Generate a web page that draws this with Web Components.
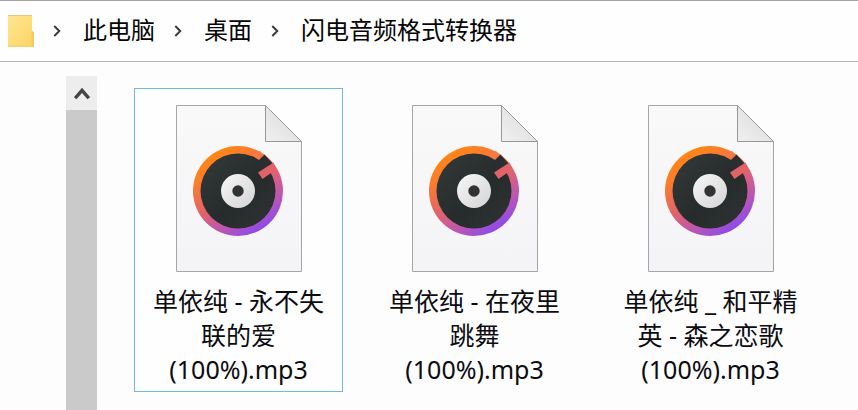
<!DOCTYPE html>
<html lang="zh-CN">
<head>
<meta charset="utf-8">
<meta name="viewport" content="width=device-width, initial-scale=1">
<title>闪电音频格式转换器</title>
<style>
  html, body { height: 100%; }
  body {
    margin: 0;
    background: #fdfdfe;
    color: #0c0c10;
    font: 24px/34px "Noto Sans", "Noto Sans CJK SC", sans-serif;
  }
</style>
</head>
<body>
<file-explorer>
  <path-bar slot="path">
    <path-crumb>此电脑</path-crumb>
    <path-crumb>桌面</path-crumb>
    <path-crumb>闪电音频格式转换器</path-crumb>
  </path-bar>
  <file-tile selected>单依纯 - 永不失联的爱(100%).mp3</file-tile>
  <file-tile>单依纯 - 在夜里跳舞(100%).mp3</file-tile>
  <file-tile>单依纯 _ 和平精英 - 森之恋歌(100%).mp3</file-tile>
</file-explorer>

<script>
(function () {
  'use strict';

  function define(name, html) {
    var template = document.createElement('template');
    template.innerHTML = html;
    customElements.define(name, class extends HTMLElement {
      constructor() {
        super();
        this.attachShadow({ mode: 'open' }).appendChild(template.content.cloneNode(true));
      }
    });
  }

  define('file-explorer', [
    '<style>',
    ':host{display:flex;flex-direction:column;min-height:100%;box-sizing:border-box;border-top:1px solid #a5a3aa}',
    '.body{flex:1;display:flex;align-items:stretch;padding:14px 16px 0 66px}',
    '.files{flex:1;display:flex;flex-wrap:wrap;align-content:flex-start;gap:27px;padding:12px 0 18px 37px}',
    '</style>',
    '<slot name="path"></slot>',
    '<div class="body">',
    '<scroll-rail></scroll-rail>',
    '<main class="files"><slot></slot></main>',
    '</div>'
  ].join(''));

  define('path-bar', [
    '<style>',
    ':host{display:block;border-bottom:1px solid #b7b3bb;background:#fefefe}',
    'nav{display:flex;align-items:center;min-height:60px;padding-left:8px}',
    '.folder{display:block;flex:none}',
    '</style>',
    '<nav aria-label="路径">',
    '<svg class="folder" width="26" height="32" viewBox="0 0 26 32" aria-hidden="true">',
    '<defs><linearGradient id="f" x1="0" y1="0" x2="1" y2="1"><stop offset="0" stop-color="#ffe592"/><stop offset="1" stop-color="#fbd565"/></linearGradient></defs>',
    '<path d="M0 0.5H24V15.5L26 18V31.5H0Z" fill="url(#f)"/>',
    '<path d="M24 15.5 26 18V31.5H23.5V18Z" fill="#f6c95c"/>',
    '<path d="M0 .5H24" stroke="#e8c878"/>',
    '<path d="M0 31.2H26" stroke="#efc45b"/>',
    '</svg>',
    '<slot></slot>',
    '</nav>'
  ].join(''));

  define('path-crumb', [
    '<style>',
    ':host{display:flex;align-items:center}',
    'svg{display:block;margin:0 22px 0 19px}',
    'a{padding-bottom:3px;color:#050505;text-decoration:none;white-space:nowrap}',
    'a:hover{background:#e5f3ff}',
    '</style>',
    '<svg width="8" height="12" viewBox="0 0 8 12" aria-hidden="true"><path d="M1.3 1 6.3 6 1.3 11" fill="none" stroke="#38383c" stroke-width="1.9"/></svg>',
    '<a href="#"><slot></slot></a>'
  ].join(''));

  define('scroll-rail', [
    '<style>',
    ':host{display:flex;flex-direction:column;flex:none;width:31px;background:#f0f0f1}',
    'button{display:flex;align-items:center;justify-content:center;height:34px;padding:0;border:0;background:#ededee}',
    '.thumb{flex:1;background:#cacaca}',
    '</style>',
    '<button type="button" aria-label="向上滚动">',
    '<svg width="16" height="14" viewBox="0 0 16 14" aria-hidden="true"><path d="M1.2 12.2 8 4.4 14.8 12.2" fill="none" stroke="#434448" stroke-width="3.4"/></svg>',
    '</button>',
    '<div class="thumb"></div>'
  ].join(''));

  // page with a folded corner and the record logo on it
  define('audio-icon', [
    '<style>:host{display:block}svg{display:block}</style>',
    '<svg width="126" height="167" viewBox="0 0 126 167" aria-hidden="true">',
    '<defs>',
    '<linearGradient id="paper" x1="0" y1="0" x2="0" y2="1"><stop offset="0" stop-color="#f9f9fa"/><stop offset="1" stop-color="#f4f4f6"/></linearGradient>',
    '<linearGradient id="fold" x1="0" y1="1" x2="1" y2="0"><stop offset="0" stop-color="#f0f0f0"/><stop offset="1" stop-color="#d8d9da"/></linearGradient>',
    '<linearGradient id="ring" gradientUnits="userSpaceOnUse" x1="38" y1="48" x2="85" y2="126"><stop offset="0" stop-color="#ff8615"/><stop offset=".18" stop-color="#fc7c2c"/><stop offset=".5" stop-color="#e2636c"/><stop offset=".78" stop-color="#b956b5"/><stop offset="1" stop-color="#8a49ee"/></linearGradient>',
    '<linearGradient id="disc" x1="0" y1="0" x2="1" y2="1"><stop offset="0" stop-color="#34393b"/><stop offset=".55" stop-color="#262b2b"/><stop offset="1" stop-color="#303334"/></linearGradient>',
    '<linearGradient id="label" x1="0" y1="0" x2="1" y2="1"><stop offset="0" stop-color="#f7f7f7"/><stop offset="1" stop-color="#d4d4d6"/></linearGradient>',
    '</defs>',
    '<path d="M.5.5H89.5L125.5 36.5V166.5H.5Z" fill="url(#paper)" stroke="#a6a6a9"/>',
    '<path d="M89.5.5V36.5H125.5Z" fill="url(#fold)" stroke="#98989b"/>',
    '<circle cx="62" cy="86" r="45" fill="url(#ring)"/>',
    '<circle cx="62" cy="86" r="37.5" fill="url(#disc)"/>',
    // tonearm gap and the arm
    '<path d="M81 57 88.5 49.5 97 59 84 68Z" fill="#2b2e30"/>',
    '<path d="M76 50 82.5 54.5 87.5 50 84 46Z" fill="#f87946"/>',
    '<path d="M82 67.5 97.5 57.5 102 68 95 68 86.5 74Z" fill="#df6369"/>',
    '<circle cx="62" cy="86" r="17" fill="url(#label)"/>',
    '<circle cx="62" cy="86" r="5.7" fill="#303233"/>',
    '</svg>'
  ].join(''));

  define('file-tile', [
    '<style>',
    ':host{display:block;width:209px}',
    'button{display:flex;flex-direction:column;align-items:center;gap:12px;width:100%;padding:16px 14px 5px;border:1px solid transparent;background:none;color:inherit;font:inherit;font-size:25px;text-align:center}',
    ':host([selected]) button{border-color:#72b8e8;background:#fefefe}',
    '.name{display:block;width:100%}',
    '</style>',
    '<button type="button">',
    '<audio-icon></audio-icon>',
    '<span class="name"><slot></slot></span>',
    '</button>'
  ].join(''));
})();
</script>
</body>
</html>
